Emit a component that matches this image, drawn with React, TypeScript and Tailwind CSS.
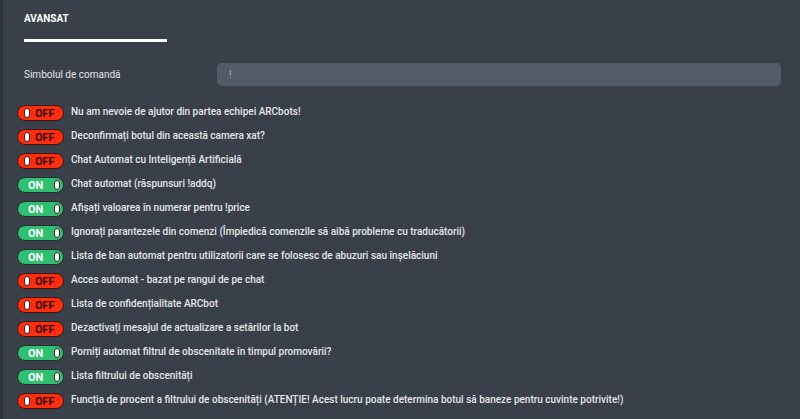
import React from "react";

const rows: [boolean, string][] = [
  [false, "Nu am nevoie de ajutor din partea echipei ARCbots!"],
  [false, "Deconfirmați botul din această camera xat?"],
  [false, "Chat Automat cu Inteligență Artificială"],
  [true, "Chat automat (răspunsuri !addq)"],
  [true, "Afișați valoarea în numerar pentru !price"],
  [true, "Ignorați parantezele din comenzi (Împiedică comenzile să aibă probleme cu traducătorii)"],
  [true, "Lista de ban automat pentru utilizatorii care se folosesc de abuzuri sau înșelăciuni"],
  [false, "Acces automat - bazat pe rangul de pe chat"],
  [false, "Lista de confidențialitate ARCbot"],
  [false, "Dezactivați mesajul de actualizare a setărilor la bot"],
  [true, "Porniți automat filtrul de obscenitate în timpul promovării?"],
  [true, "Lista filtrului de obscenități"],
  [false, "Funcția de procent a filtrului de obscenități (ATENȚIE! Acest lucru poate determina botul să baneze pentru cuvinte potrivite!)"],
];

function Toggle({ on }: { on: boolean }) {
  if (on) {
    return (
      <div className="flex h-[16px] w-[47px] shrink-0 items-center justify-between rounded-full border-[1.5px] border-[#2a2a2a] bg-[#2fbf71] pl-[10px] pr-[3px]">
        <span className="text-[11px] font-bold leading-none text-white">ON</span>
        <span className="h-[10px] w-[6px] rounded-[3px] border border-[#2a2a2a] bg-white" />
      </div>
    );
  }
  return (
    <div className="flex h-[16px] w-[47px] shrink-0 items-center gap-[5px] rounded-full border-[1.5px] border-[#3a1a12] bg-[#ff2d0d] pl-[6px]">
      <span className="h-[10px] w-[6px] rounded-[3px] border border-[#2a2a2a] bg-white" />
      <span className="text-[11px] font-bold leading-none text-[#2a0c05]">OFF</span>
    </div>
  );
}

export default function App() {
  return (
    <div
      className="flex h-[419px] w-[800px] overflow-hidden bg-[#3a4049] text-[#e4e6e9]"
      style={{ fontFamily: "Roboto, 'Open Sans', sans-serif" }}
    >
      <div className="w-[3px] shrink-0 bg-[#2d333b]" />
      <div className="flex flex-1 flex-col pl-[14px] pr-[19px]">
        <div className="pl-[7px] pt-[12px]">
          <div className="text-[10px] font-bold leading-[14px] text-white">AVANSAT</div>
          <div className="mt-[13px] h-[3px] w-[143px] bg-white" />
        </div>
        <div className="mt-[21px] flex items-center pl-[7px]">
          <div className="w-[193px] text-[10px]">Simbolul de comandă</div>
          <div className="flex h-[23px] flex-1 items-center rounded-[5px] bg-[#525c68] pl-[12px] text-[10px] text-[#a9b0b8]">
            !
          </div>
        </div>
        <div className="mt-[19px] flex flex-col gap-[8px]">
          {rows.map(([on, label], i) => (
            <div key={i} className="flex h-[16px] items-center gap-[7px]">
              <Toggle on={on} />
              <span className="-mt-[3px] whitespace-nowrap text-[10px] font-medium">{label}</span>
            </div>
          ))}
          <div className="mt-[7px] pl-[7px] text-[10px] text-[#c8ccd0]">Mesajul de bun venit al botului</div>
        </div>
      </div>
    </div>
  );
}
